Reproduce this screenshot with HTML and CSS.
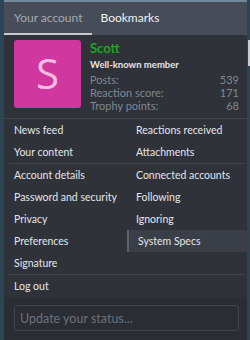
FILE: index.html
```html
<!DOCTYPE html>
<html lang="en">
<head>
    <meta charset="UTF-8">
    <meta name="viewport" content="width=device-width, initial-scale=1.0">
    <title>Account menu</title>
    <link rel="stylesheet" href="styles.css">
</head>
<body>
    <div class="menu">

        <div class="tabs">
            <a class="tab active">Your account</a>
            <a class="tab">Bookmarks</a>
        </div>

        <div class="profile">
            <div class="avatar">S</div>
            <div class="info">
                <div class="name">Scott</div>
                <div class="title">Well-known member</div>
                <dl class="stat"><dt>Posts:</dt><dd>539</dd></dl>
                <dl class="stat"><dt>Reaction score:</dt><dd>171</dd></dl>
                <dl class="stat"><dt>Trophy points:</dt><dd>68</dd></dl>
            </div>
        </div>

        <ul class="links">
            <li><a>News feed</a></li>
            <li><a>Reactions received</a></li>
            <li><a>Your content</a></li>
            <li><a>Attachments</a></li>
        </ul>
        <ul class="links">
            <li><a>Account details</a></li>
            <li><a>Connected accounts</a></li>
            <li><a>Password and security</a></li>
            <li><a>Following</a></li>
            <li><a>Privacy</a></li>
            <li><a>Ignoring</a></li>
            <li><a>Preferences</a></li>
            <li><a class="hover">System Specs</a></li>
            <li><a>Signature</a></li>
        </ul>
        <ul class="links single">
            <li><a>Log out</a></li>
        </ul>

        <div class="status">
            <input class="status-input" placeholder="Update your status...">
        </div>

        <div class="thumb"></div>
    </div>
</body>
</html>
```

FILE: styles.css
```css
*{
    box-sizing: border-box;
    margin: 0;
    padding: 0;
}

body{
    background-color: #2c4453;
    font-family: Lato, "Open Sans", sans-serif;
    color: #e4e6ea;
}

.menu{
    position: relative;
    margin: 0 3px 0 4px;
    border-top: 2px solid #71879a;
    background-color: #2f3239;
    height: 340px;
}

/* tabs */
.tabs{
    display: flex;
    height: 33px;
    background-color: #464c58;
}

.tab{
    display: flex;
    align-items: center;
    padding: 0 10px;
    font-size: 12px;
    color: #f0f1f3;
    border-bottom: 2px solid transparent;
}

.tab.active{
    color: #a3a9b3;
    border-bottom-color: #c5c9d0;
    margin-right: -2px;
}

/* profile block */
.profile{
    display: flex;
    gap: 9px;
    padding: 5px 8px 6px 10px;
    border-bottom: 1px solid #40444c;
}

.avatar{
    width: 67px;
    height: 68px;
    flex-shrink: 0;
    background-color: #d0379f;
    border-radius: 3px;
    color: #f7bce4;
    font-family: "Open Sans", sans-serif;
    font-size: 42px;
    display: flex;
    align-items: center;
    justify-content: center;
    line-height: 1;
    padding-bottom: 3px;
}

.info{
    flex: 1;
}

.name{
    color: #1ea61e;
    font-weight: 700;
    font-size: 13px;
    line-height: 17px;
}

.title{
    font-size: 9.5px;
    font-weight: 700;
    line-height: 14px;
    margin-top: 1px;
    margin-bottom: 1px;
}

.stat{
    display: flex;
    justify-content: space-between;
    font-size: 11px;
    line-height: 13px;
    color: #7f8894;
}

/* link list */
.links{
    list-style: none;
    display: grid;
    grid-template-columns: 118px 1fr;
    margin: 0 2px 0 5px;
    border-bottom: 1px solid #40444c;
}

.links a{
    display: block;
    font-size: 10.5px;
    line-height: 22px;
    padding-left: 5px;
}

.links li:nth-child(even) a{
    padding-left: 9px;
}

.links a.hover{
    background-color: #3a3e47;
    border-left: 2px solid #5d626c;
    padding-left: 7px;
    margin-right: -4px;
}

.links.single{
    grid-template-columns: 1fr;
    border-bottom: none;
}

/* status box */
.status{
    background-color: #2a2d34;
    padding: 8px 8px 10px 10px;
}

.status-input{
    width: 100%;
    height: 26px;
    background: none;
    border: 1px solid #41454e;
    border-radius: 3px;
    padding: 0 5px;
    font-family: Lato, "Open Sans", sans-serif;
    font-size: 12.5px;
    color: #e4e6ea;
    outline: none;
}

.status-input::placeholder{
    color: #6b717b;
}

/* scrollbar thumb at the right edge */
.thumb{
    position: absolute;
    top: 38px;
    right: -3px;
    width: 2px;
    height: 26px;
    background-color: #c9ccd1;
}
```
